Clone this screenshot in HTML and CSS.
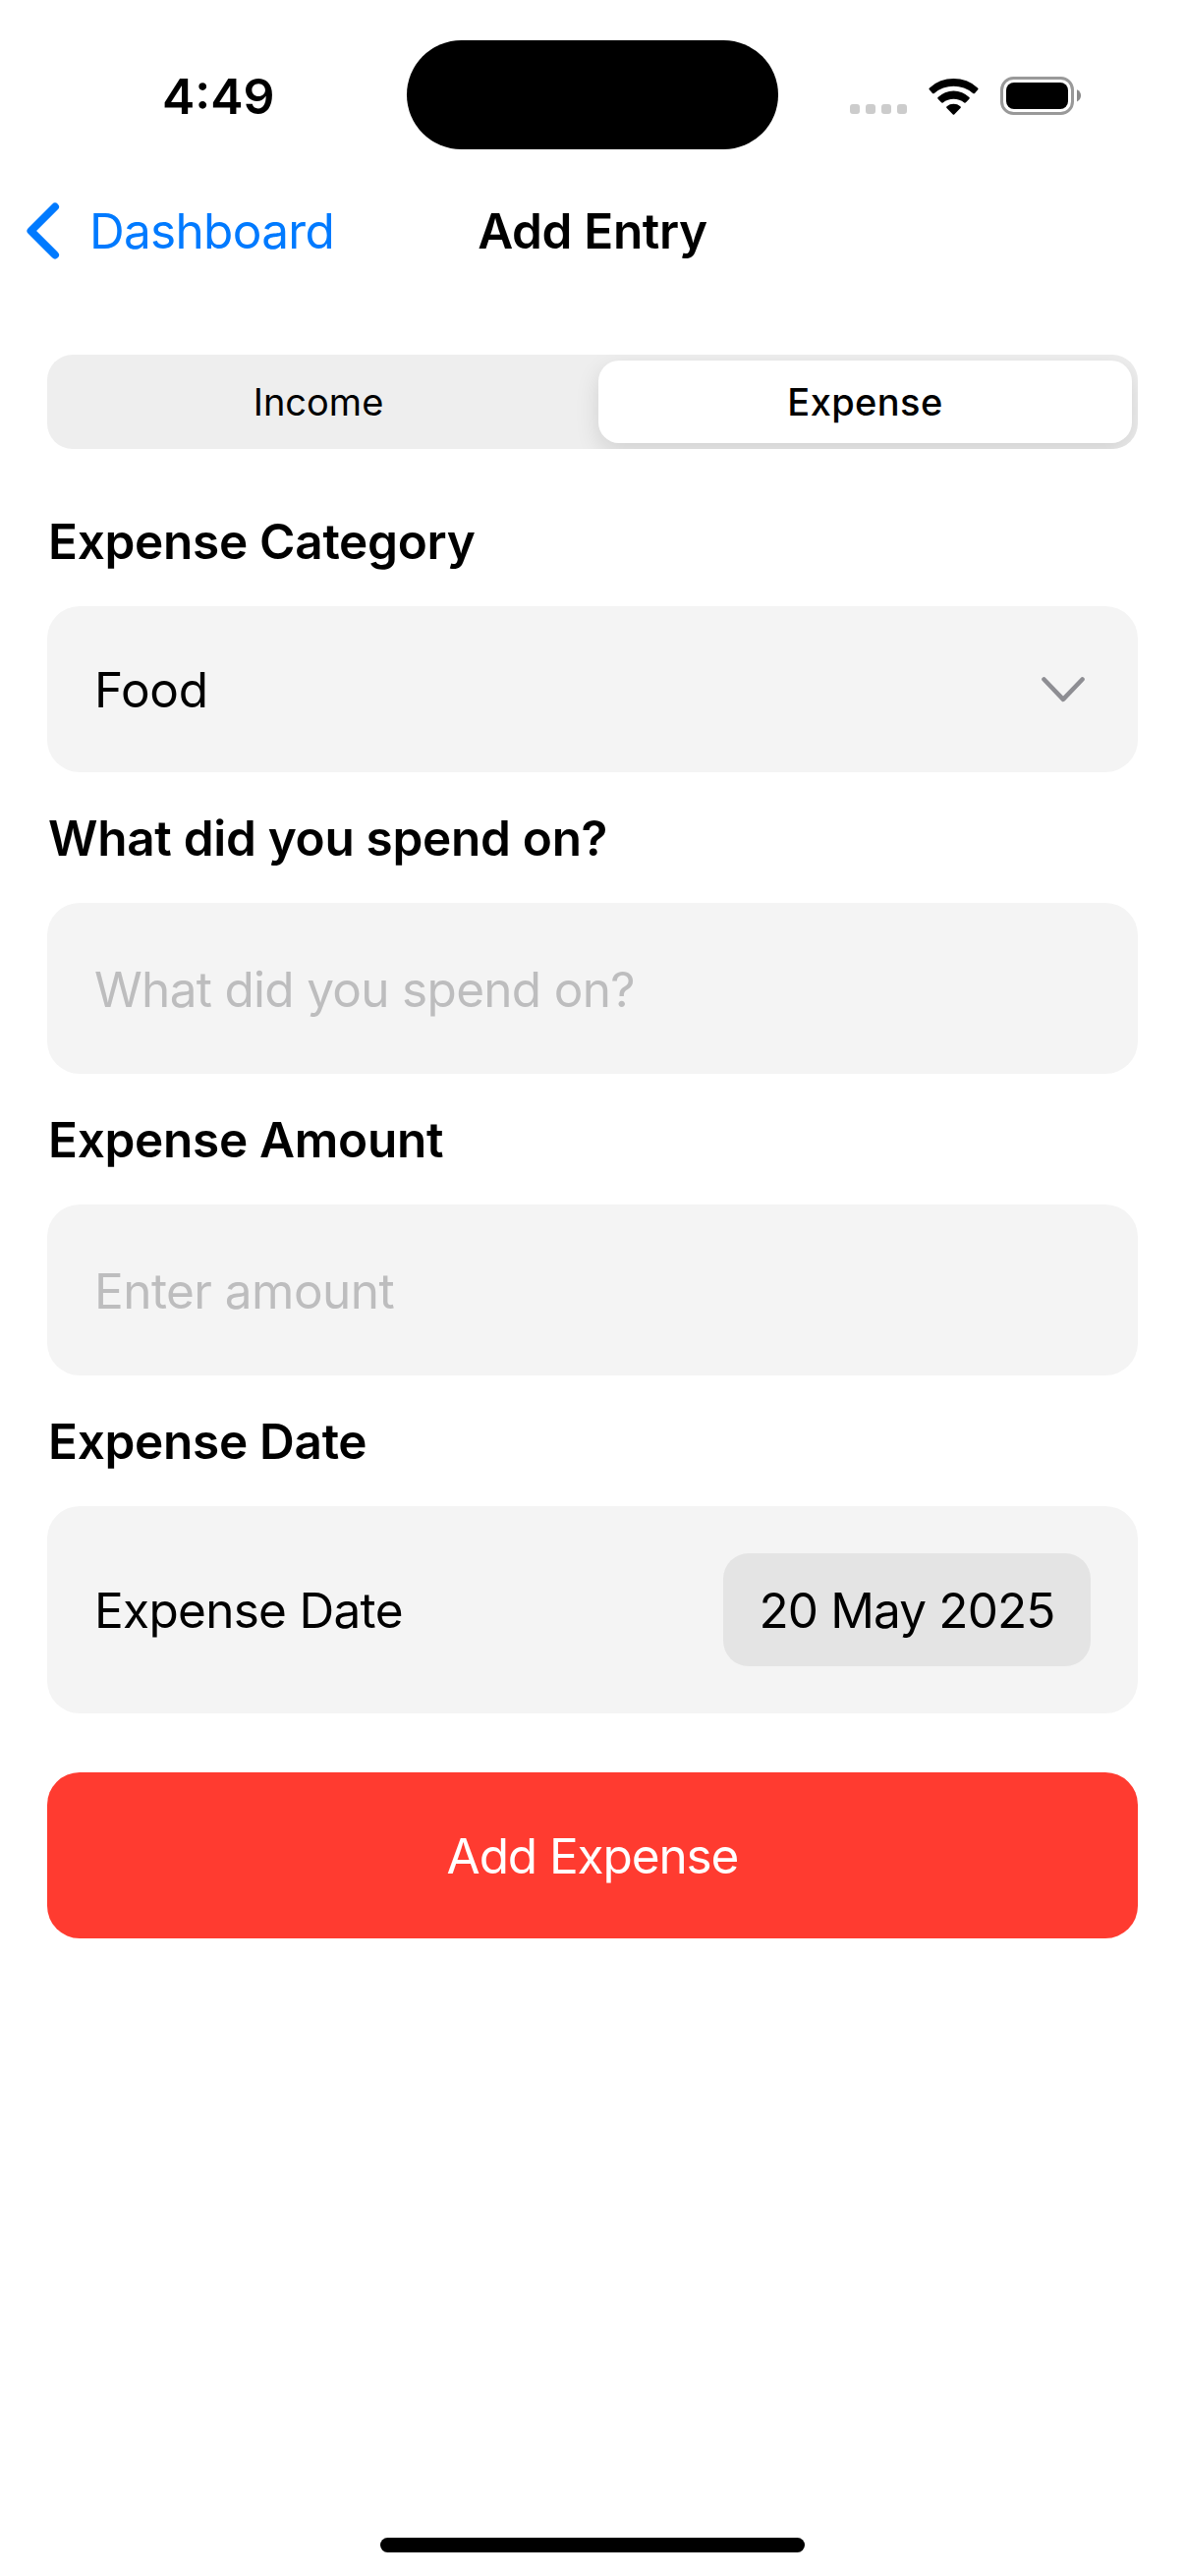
FILE: index.html
```html
<!DOCTYPE html>
<html lang="en">
<head>
<meta charset="utf-8">
<title>Add Entry</title>
<link rel="stylesheet" href="styles.css">
</head>
<body>
<div class="screen">
  <header class="status">
    <div class="status-time">4:49</div>
    <div class="island"></div>
    <div class="status-icons">
      <div class="signal"><i></i><i></i><i></i><i></i></div>
      <svg class="wifi" width="51" height="38" viewBox="0 0 51 38">
        <path d="M1 12.4Q-.1 11.4 1 10.5A36 36 0 0 1 50 10.5Q51.100 11.400 50 12.400L47 15.900Q46.200 16.800 45.200 15.900A30.500 30.500 0 0 0 5.800 15.900Q4.800 16.800 4 15.900Z"/>
        <path d="M9.600 21.700Q8.700 20.800 9.600 20A22.500 22.500 0 0 1 41.400 20Q42.300 20.800 41.400 21.700L38 25.300Q37.200 26.100 36.300 25.400A17.500 17.500 0 0 0 14.700 25.400Q13.800 26.100 13 25.300Z"/>
        <path d="M18.500 31Q17.600 30.100 18.600 29.200A11 11 0 0 1 32.400 29.200Q33.400 30.100 32.500 31L26.200 37.400Q25.500 38 24.800 37.400Z"/>
      </svg>
      <svg class="battery" width="82" height="39" viewBox="0 0 82 39">
        <rect x="1.500" y="1.500" width="72" height="36" rx="12" fill="none" stroke="#999" stroke-width="3"/>
        <rect x="6" y="6" width="63" height="27" rx="8"/>
        <path d="M78 13.200Q82 15 82 19.300T78 25.500Z" fill="#8a8a8a"/>
      </svg>
    </div>
  </header>

  <nav class="nav">
    <a class="back">
      <svg width="34" height="58" viewBox="0 0 34 58" fill="none" stroke="#007aff" stroke-width="8" stroke-linecap="round" stroke-linejoin="round"><path d="M29 4.500L4.500 29L29 53.500"/></svg>
      <span>Dashboard</span>
    </a>
    <h1 class="title">Add Entry</h1>
  </nav>

  <main class="form">
    <div class="segments">
      <div class="segment">Income</div>
      <div class="segment selected">Expense</div>
    </div>

    <h2 class="label">Expense Category</h2>
    <div class="field select">
      <span>Food</span>
      <svg width="44" height="26" viewBox="0 0 44 26" fill="none" stroke="#8e8e93" stroke-width="4.600" stroke-linecap="round" stroke-linejoin="round"><path d="M2.500 2.500L22 22.800L41.500 2.500"/></svg>
    </div>

    <h2 class="label">What did you spend on?</h2>
    <div class="field input">What did you spend on?</div>

    <h2 class="label">Expense Amount</h2>
    <div class="field input amount">Enter amount</div>

    <h2 class="label">Expense Date</h2>
    <div class="field date">
      <span>Expense Date</span>
      <span class="chip">20 May 2025</span>
    </div>

    <div class="submit">Add Expense</div>
  </main>

  <div class="home"></div>
</div>
</body>
</html>
```
FILE: styles.css
```css
* { box-sizing: border-box; }

body {
  margin: 0;
  background: #fff;
  color: #000;
  font-family: Inter, sans-serif;
  font-size: 49.5px;
  letter-spacing: -0.7px;
}

.screen {
  width: 1206px;
  height: 2622px;
  display: flex;
  flex-direction: column;
}

svg { display: block; flex: none; }

/* Status bar */
.status {
  height: 177px;
  padding-top: 41px;
  display: grid;
  grid-template-columns: 414px 378px 414px;
}

.status-time {
  padding: 27px 0 0 165px;
  font-size: 50px;
  font-weight: 600;
  line-height: 60px;
  letter-spacing: 0;
}

.island {
  height: 111px;
  border-radius: 56px;
  background: #000;
}

.status-icons {
  display: flex;
  align-items: flex-start;
  padding: 37px 0 0 73px;
}

.signal {
  display: flex;
  gap: 6px;
  margin-top: 28px;
}

.signal i {
  width: 10px;
  height: 10px;
  border-radius: 3px;
  background: #ccc;
}

.wifi { margin: 1px 0 0 22px; }
.battery { margin-left: 22px; }

/* Navigation bar */
.nav {
  height: 116px;
  display: grid;
  grid-template-columns: 1fr auto 1fr;
  align-items: center;
}

.back {
  display: flex;
  align-items: center;
  gap: 30px;
  padding-left: 27px;
  color: #007aff;
}

.title {
  margin: 0;
  font-size: 49.5px;
  font-weight: 600;
  letter-spacing: -0.35px;
}

/* Form */
.form { padding: 68px 48px 0; }

.segments {
  height: 96px;
  margin-bottom: 64px;
  display: grid;
  grid-template-columns: 1fr 1fr;
  border-radius: 26px;
  background: #eee;
  overflow: hidden;
  font-size: 38px;
  letter-spacing: 0;
}

.segment {
  display: flex;
  align-items: center;
  justify-content: center;
  padding-right: 3px;
}

.segment.selected {
  margin: 6px;
  padding: 0;
  border-radius: 21px;
  background: #fff;
  font-weight: 500;
  letter-spacing: 0.4px;
  box-shadow: 0 9px 24px rgba(0, 0, 0, .12);
}

.label {
  margin: 0 0 35px;
  padding-left: 1px;
  font-size: 49.5px;
  font-weight: 600;
  line-height: 61px;
  letter-spacing: -0.3px;
}

.field {
  display: flex;
  align-items: center;
  justify-content: space-between;
  margin-bottom: 37px;
  padding: 0 48px;
  border-radius: 33px;
  background: #f4f4f4;
}

.select {
  height: 169px;
  padding-right: 54px;
  letter-spacing: -0.3px;
}

.input {
  height: 174px;
  padding-top: 2px;
  color: #bdbdbe;
}

.amount { letter-spacing: -0.55px; }

.date {
  height: 211px;
  margin-bottom: 60px;
}

.chip {
  width: 374px;
  height: 115px;
  display: flex;
  align-items: center;
  justify-content: center;
  border-radius: 26px;
  background: #e4e4e4;
  letter-spacing: -0.85px;
}

.submit {
  height: 169px;
  display: flex;
  align-items: center;
  justify-content: center;
  border-radius: 33px;
  background: #ff3b30;
  color: #fff;
  letter-spacing: -1.1px;
}

/* Home indicator */
.home {
  width: 432px;
  height: 15px;
  margin: auto auto 24px;
  border-radius: 8px;
  background: #000;
}
```
